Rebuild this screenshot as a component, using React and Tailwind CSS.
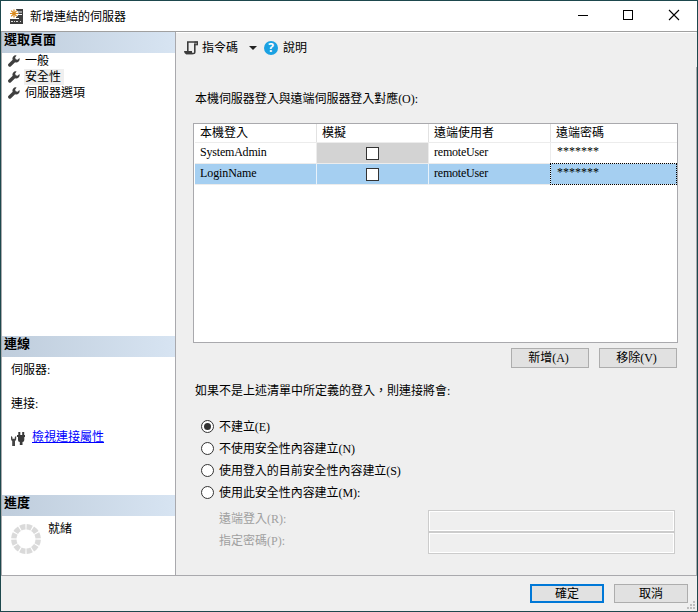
import React from "react";

const FONT = "font-['Liberation_Serif','Noto_Sans_CJK_TC',serif]";

function Wrench() {
  return (
    <svg width="12" height="12" viewBox="0 0 12 12" className="shrink-0">
      <path
        d="M8.6.5A3.2 3.2 0 0 0 4.7 4.8L.6 8.8a1.6 1.6 0 0 0 2.4 2.4l4.1-4A3.3 3.3 0 0 0 11.4 3L9.6 4.7 7.7 4.3 7.1 2.4z"
        fill="#3f3f3f"
      />
    </svg>
  );
}

function AppIcon() {
  return (
    <svg width="14" height="15" viewBox="0 0 14 15" className="shrink-0">
      <path d="M6 0h7v15H0V9.500h6z" fill="#3e3e3e" />
      <path d="M7 3h5M7 5.500h5" stroke="#f4f4f4" strokeWidth="1" />
      <circle cx="4" cy="4.500" r="4.400" fill="#fff" />
      <path d="M4 .5v8M0 4.500h8M1.200 1.700l5.600 5.600M6.800 1.700L1.200 7.300" stroke="#d98a1e" strokeWidth="1.200" />
      <path d="M0 9.500h9" stroke="#fff" />
      <path d="M1 12.500h2M4 12.500h1M6 12.500h2M10 12.500h1" stroke="#ddd" />
    </svg>
  );
}

function ScriptIcon() {
  return (
    <svg width="14" height="14" viewBox="0 0 14 14" className="shrink-0">
      <path d="M3.800 10.500V1h9.400v2.500h-2.400v7.700q0 1.300-1.400 1.300H2" fill="none" stroke="#3c3c3c" strokeWidth="1.600" />
      <path d="M0 10h8v1.400q0 .8.8 1.900H2Q.2 12.800 0 10z" fill="#3c3c3c" />
      <path d="M10.500.500h3.300v3.600h-3.300z" fill="#3c3c3c" />
      <path d="M12 1.800v1.400" stroke="#efefef" strokeWidth=".8" />
    </svg>
  );
}

function PlugIcon() {
  return (
    <svg width="14" height="14" viewBox="0 0 14 14" className="shrink-0">
      <path d="M0 4v3q0 1.300 1.200 2V14h2.800V9q1.200-.7 1.200-2V4L3.800 5v1.800H1.400V5z" fill="#444" />
      <path d="M7.300 0h2v3h1.900V0h2v3H14v2h-.7v3q0 1.800-1.800 2v3h-2.700v-3Q7 9.800 7 8V5H6V3h1.300z" fill="#3a3a3a" />
    </svg>
  );
}

function Spinner() {
  return (
    <svg width="30" height="30" viewBox="0 0 30 30" className="shrink-0">
      <circle cx="15" cy="15" r="12.200" fill="none" stroke="#dadada" strokeWidth="5.400" pathLength="120" strokeDasharray="8.200 1.800" strokeDashoffset="-.9" />
    </svg>
  );
}

function SectionHeader({ children }) {
  return (
    <div className="h-[21px] shrink-0 bg-linear-to-r from-[#bfcddc] to-[#d7e4f2] pl-[2px] text-[13px] leading-[15px] font-bold">
      {children}
    </div>
  );
}

function NavItem({ children, active }) {
  return (
    <div className="flex h-4 items-center pl-[6px]">
      <Wrench />
      <span className={`ml-[4px] h-4 pr-[3px] pl-px leading-4 ${active ? "bg-[#efefef]" : ""}`}>{children}</span>
    </div>
  );
}

function Button({ children, className }) {
  return (
    <button className={`flex items-center justify-center bg-[#e1e1e1] leading-4 ${className}`}>{children}</button>
  );
}

function Radio({ children, checked }) {
  return (
    <label className="flex h-[22px] items-center">
      <span className="-mt-px flex size-[13px] shrink-0 items-center justify-center rounded-full border border-[#333] bg-white">
        {checked && <span className="size-[7px] rounded-full bg-[#333]" />}
      </span>
      <span className="ml-[5px] tracking-[-0.05px] whitespace-nowrap">{children}</span>
    </label>
  );
}

const COLS = "grid grid-cols-[122px_112px_122px_126px]";

function Row({ user, selected }) {
  const line = selected ? "border-[#e8f2fa]" : "border-[#ececec]";
  return (
    <div className={`${COLS} h-[21px] border-b border-[#ececec] ${selected ? "bg-[#a5cff1]" : "bg-white"}`}>
      <div className={`border-r pl-[5px] leading-[19px] ${selected ? "tracking-[-0.1px]" : "tracking-[-0.2px]"} ${line}`}>
        {user}
      </div>
      <div className={`flex items-center justify-center border-r ${line} ${selected ? "" : "bg-[#d3d3d3]"}`}>
        <span className="size-[13px] border border-[#333] bg-white" />
      </div>
      <div className={`border-r pl-[5px] leading-[19px] tracking-[-0.2px] ${line}`}>remoteUser</div>
      <div
        className={`pl-[6px] leading-[17px] ${
          selected ? "-mt-px -ml-px h-[22px] border border-dotted border-black" : ""
        }`}
      >
        *******
      </div>
    </div>
  );
}

export default function App() {
  return (
    <div className={`flex h-[612px] w-[698px] flex-col overflow-hidden border border-[#1d484d] bg-[#efefef] text-[12px] leading-4 text-black ${FONT}`}>
      <header className="flex h-[31px] shrink-0 items-center border-b border-[#a0a0a0] bg-white pl-[9px]">
        <AppIcon />
        <span className="-mt-px ml-[6px] font-['Noto_Sans_CJK_TC',sans-serif]">新增連結的伺服器</span>
        <svg className="mr-px ml-auto" width="118" height="30" viewBox="578 1 118 30" fill="none" stroke="#000" shapeRendering="crispEdges">
          <path d="M578 15.500h10" />
          <path d="M623.500 10.500h9v9h-9z" />
          <path d="M669 10l10 10M679 10l-10 10" shapeRendering="auto" strokeWidth="1.100" />
        </svg>
      </header>

      <div className="flex h-[544px] shrink-0 border-b border-[#a9a9ad]">
        <aside className="flex w-[175px] shrink-0 flex-col border-x border-[#a9a9ad] bg-white">
          <SectionHeader>選取頁面</SectionHeader>
          <nav className="h-[283px] shrink-0">
            <NavItem>一般</NavItem>
            <NavItem active>安全性</NavItem>
            <NavItem>伺服器選項</NavItem>
          </nav>
          <SectionHeader>連線</SectionHeader>
          <div className="flex h-[138px] shrink-0 flex-col pt-[5px] pl-[9px]">
            <span>伺服器:</span>
            <span className="mt-[18px]">連接:</span>
            <div className="mt-[17px] flex">
              <div className="mt-[3px]">
                <PlugIcon />
              </div>
              <a className="ml-[7px] text-[#0000ff] underline">檢視連接屬性</a>
            </div>
          </div>
          <SectionHeader>進度</SectionHeader>
          <div className="flex pt-[5px] pl-[9px]">
            <div className="mt-[3px]">
              <Spinner />
            </div>
            <span className="ml-[7px]">就緒</span>
          </div>
        </aside>

        <main className="flex min-w-0 flex-1 flex-col border-t border-t-white pl-[17px]">
          <div className="mt-[7px] -ml-[9px] flex h-4 items-center">
            <ScriptIcon />
            <span className="ml-[4px]">指令碼</span>
            <svg className="ml-[11px]" width="8" height="4" viewBox="0 0 8 4">
              <path d="M0 0h8L4 4z" fill="#222" />
            </svg>
            <span className="ml-[7px] flex size-[14px] items-center justify-center rounded-full bg-[#1ba1e2] font-['Open_Sans',sans-serif] text-[12px] leading-none font-bold text-white">
              ?
            </span>
            <span className="ml-[5px]">說明</span>
          </div>

          <p className="mt-[35px] ml-[2px] tracking-[-0.05px]">本機伺服器登入與遠端伺服器登入對應(O):</p>

          <div className="mt-4 h-[220px] w-[485px] shrink-0 border border-[#a9a9ad] bg-white">
            <div className={`${COLS} ml-px h-[19px] border-b border-[#ececec] leading-[18px]`}>
              <span className="border-r border-[#e2e2e2] pl-[5px]">本機登入</span>
              <span className="border-r border-[#e2e2e2] pl-[5px]">模擬</span>
              <span className="border-r border-[#e2e2e2] pl-[5px]">遠端使用者</span>
              <span className="pl-[5px]">遠端密碼</span>
            </div>
            <div className="pl-px">
              <Row user="SystemAdmin" />
              <Row user="LoginName" selected />
            </div>
          </div>

          <div className="mt-[5px] flex gap-[10px] pl-[318px]">
            <Button className="h-[20px] w-[78px] border border-[#adadad] pr-[3px]">新增(A)</Button>
            <Button className="h-[20px] w-[78px] border border-[#adadad] pr-[3px]">移除(V)</Button>
          </div>

          <p className="mt-[15px] ml-[2px]">如果不是上述清單中所定義的登入，則連接將會:</p>

          <div className="mt-[17px] ml-[8px]">
            <Radio checked>不建立(E)</Radio>
            <Radio>不使用安全性內容建立(N)</Radio>
            <Radio>使用登入的目前安全性內容建立(S)</Radio>
            <Radio>使用此安全性內容建立(M):</Radio>
          </div>

          <div className="mt-[6px] ml-[26px] grid grid-cols-[209px_247px] text-[#a0a0a0]">
            <span className="leading-[18px]">遠端登入(R):</span>
            <span className="h-[22px] border border-[#cccccc] shadow-[inset_0_0_0_1px_#fff]" />
            <span className="leading-[18px]">指定密碼(P):</span>
            <span className="h-[22px] border border-[#cccccc] shadow-[inset_0_0_0_1px_#fff]" />
          </div>
        </main>
        <div className="mt-[35px] w-px shrink-0 bg-[#a9a9ad]" />
      </div>

      <footer className="flex flex-1 pt-[8px] pl-[529px]">
        <Button className="h-[19px] w-[74px] border-2 border-[#0078d7]">確定</Button>
        <Button className="ml-[10px] h-[19px] w-[74px] border border-[#adadad]">取消</Button>
        <svg className="mt-[17px] -ml-px" width="8" height="8" viewBox="0 0 8 8" fill="#bfbfbf">
          <path d="M6 0h2v2H6zM3 3h2v2H3zM6 3h2v2H6zM0 6h2v2H0zM3 6h2v2H3zM6 6h2v2H6z" />
        </svg>
      </footer>
    </div>
  );
}
